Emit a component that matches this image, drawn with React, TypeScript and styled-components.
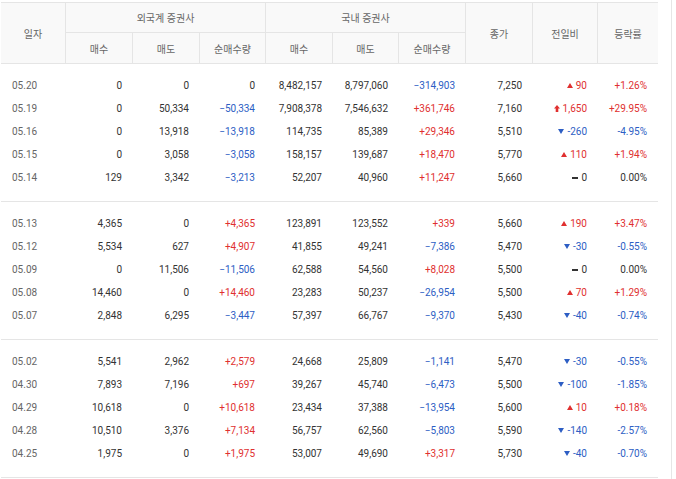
import React from "react";
import styled, { createGlobalStyle } from "styled-components";

const Global = createGlobalStyle`
  html, body { margin: 0; padding: 0; background: #fff; }
  body { font-family: Roboto, "Noto Sans CJK KR", sans-serif; font-size: 10px; color: #333; }
`;

const COLS = "65px 67px 67px 66px 67px 66px 67px 67px 65px 60px";
const RED = "#e0302f";
const BLUE = "#2d5ec4";

const Page = styled.div`
  width: 670px;
  min-height: 479px;
  padding: 2px 0 0 1px;
  border-right: 1px solid #e6e6e6;
`;

const Table = styled.div`
  width: 657px;
`;

const Head = styled.div`
  display: grid;
  grid-template-columns: ${COLS};
  grid-template-rows: 30px 30px;
  background: #f9f9f9;
  border-top: 1px solid #e5e5e5;
  border-bottom: 1px solid #e5e5e5;
`;

const HeadCell = styled.div<{ $rows?: number; $cols?: number; $bottom?: boolean; $last?: boolean }>`
  grid-row: span ${(p) => p.$rows || 1};
  grid-column: span ${(p) => p.$cols || 1};
  display: flex;
  align-items: center;
  justify-content: center;
  color: #666;
  font-size: 10px;
  border-right: ${(p) => (p.$last ? "none" : "1px solid #e5e5e5")};
  border-bottom: ${(p) => (p.$bottom ? "1px solid #e5e5e5" : "none")};
`;

const Group = styled.div`
  padding: 10px 0 12px;
  border-bottom: 1px solid #e5e5e5;
`;

const Row = styled.div`
  display: grid;
  grid-template-columns: ${COLS};
  height: 23px;
  align-items: center;
`;

const DateCell = styled.div`
  padding-left: 11px;
  color: #666;
`;

const Num = styled.div<{ $tone?: "up" | "down" | "none" }>`
  text-align: right;
  padding-right: 11px;
  display: flex;
  justify-content: flex-end;
  align-items: center;
  gap: 3px;
  color: ${(p) => (p.$tone === "up" ? RED : p.$tone === "down" ? BLUE : "#333")};
`;

const Icon = styled.svg`
  display: block;
`;

type Chg = "up" | "down" | "flat" | "limit";

const ChangeIcon = ({ kind }: { kind: Chg }) => {
  if (kind === "up")
    return (
      <Icon width="6" height="5" viewBox="0 0 6 5">
        <path d="M3 0 L6 5 L0 5 Z" fill={RED} />
      </Icon>
    );
  if (kind === "down")
    return (
      <Icon width="6" height="5" viewBox="0 0 6 5">
        <path d="M0 0 L6 0 L3 5 Z" fill={BLUE} />
      </Icon>
    );
  if (kind === "limit")
    return (
      <Icon width="6" height="7" viewBox="0 0 6 7">
        <path d="M3 0 L6 3.5 L4.3 3.5 L4.3 7 L1.7 7 L1.7 3.5 L0 3.5 Z" fill={RED} />
      </Icon>
    );
  return (
    <Icon width="6" height="2" viewBox="0 0 6 2">
      <rect x="0" y="0" width="6" height="2" fill="#333" />
    </Icon>
  );
};

type RowData = [string, string, string, string, string, string, string, string, Chg, string, string];

const groups: RowData[][] = [
  [
    ["05.20", "0", "0", "0", "8,482,157", "8,797,060", "−314,903", "7,250", "up", "90", "+1.26%"],
    ["05.19", "0", "50,334", "−50,334", "7,908,378", "7,546,632", "+361,746", "7,160", "limit", "1,650", "+29.95%"],
    ["05.16", "0", "13,918", "−13,918", "114,735", "85,389", "+29,346", "5,510", "down", "-260", "-4.95%"],
    ["05.15", "0", "3,058", "−3,058", "158,157", "139,687", "+18,470", "5,770", "up", "110", "+1.94%"],
    ["05.14", "129", "3,342", "−3,213", "52,207", "40,960", "+11,247", "5,660", "flat", "0", "0.00%"],
  ],
  [
    ["05.13", "4,365", "0", "+4,365", "123,891", "123,552", "+339", "5,660", "up", "190", "+3.47%"],
    ["05.12", "5,534", "627", "+4,907", "41,855", "49,241", "−7,386", "5,470", "down", "-30", "-0.55%"],
    ["05.09", "0", "11,506", "−11,506", "62,588", "54,560", "+8,028", "5,500", "flat", "0", "0.00%"],
    ["05.08", "14,460", "0", "+14,460", "23,283", "50,237", "−26,954", "5,500", "up", "70", "+1.29%"],
    ["05.07", "2,848", "6,295", "−3,447", "57,397", "66,767", "−9,370", "5,430", "down", "-40", "-0.74%"],
  ],
  [
    ["05.02", "5,541", "2,962", "+2,579", "24,668", "25,809", "−1,141", "5,470", "down", "-30", "-0.55%"],
    ["04.30", "7,893", "7,196", "+697", "39,267", "45,740", "−6,473", "5,500", "down", "-100", "-1.85%"],
    ["04.29", "10,618", "0", "+10,618", "23,434", "37,388", "−13,954", "5,600", "up", "10", "+0.18%"],
    ["04.28", "10,510", "3,376", "+7,134", "56,757", "62,560", "−5,803", "5,590", "down", "-140", "-2.57%"],
    ["04.25", "1,975", "0", "+1,975", "53,007", "49,690", "+3,317", "5,730", "down", "-40", "-0.70%"],
  ],
];

const tone = (v: string): "up" | "down" | "none" =>
  v.startsWith("+") ? "up" : v.startsWith("−") || v.startsWith("-") ? "down" : "none";

const chgTone = (k: Chg): "up" | "down" | "none" =>
  k === "up" || k === "limit" ? "up" : k === "down" ? "down" : "none";

export default function App() {
  return (
    <>
      <Global />
      <Page>
        <Table>
          <Head>
            <HeadCell $rows={2}>일자</HeadCell>
            <HeadCell $cols={3} $bottom>외국계 증권사</HeadCell>
            <HeadCell $cols={3} $bottom>국내 증권사</HeadCell>
            <HeadCell $rows={2}>종가</HeadCell>
            <HeadCell $rows={2}>전일비</HeadCell>
            <HeadCell $rows={2} $last>등락률</HeadCell>
            <HeadCell>매수</HeadCell>
            <HeadCell>매도</HeadCell>
            <HeadCell>순매수량</HeadCell>
            <HeadCell>매수</HeadCell>
            <HeadCell>매도</HeadCell>
            <HeadCell>순매수량</HeadCell>
          </Head>
          {groups.map((g, gi) => (
            <Group key={gi}>
              {g.map((r) => (
                <Row key={r[0]}>
                  <DateCell>{r[0]}</DateCell>
                  <Num>{r[1]}</Num>
                  <Num>{r[2]}</Num>
                  <Num $tone={tone(r[3])}>{r[3]}</Num>
                  <Num>{r[4]}</Num>
                  <Num>{r[5]}</Num>
                  <Num $tone={tone(r[6])}>{r[6]}</Num>
                  <Num>{r[7]}</Num>
                  <Num $tone={chgTone(r[8])}>
                    <ChangeIcon kind={r[8]} />
                    {r[9]}
                  </Num>
                  <Num $tone={tone(r[10])}>{r[10]}</Num>
                </Row>
              ))}
            </Group>
          ))}
        </Table>
      </Page>
    </>
  );
}
